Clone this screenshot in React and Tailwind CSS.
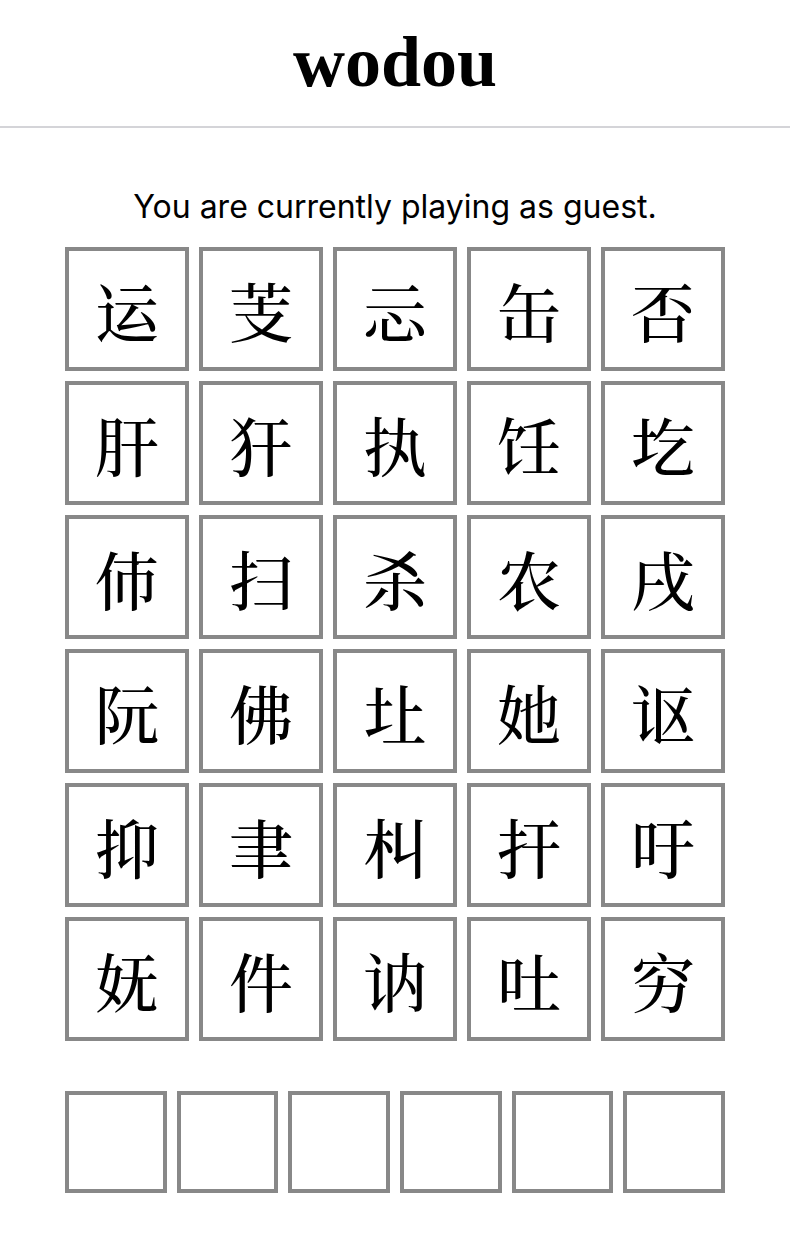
import React from 'react';

const rows = [
  ['运', '芰', '忈', '缶', '否'],
  ['肝', '犴', '执', '饪', '圪'],
  ['伂', '扫', '杀', '农', '戌'],
  ['阮', '佛', '圵', '她', '讴'],
  ['抑', '聿', '朻', '扞', '吁'],
  ['妩', '件', '讷', '吐', '穷'],
];

export default function App() {
  return (
    <div className="min-h-screen bg-white text-black">
      {/* header */}
      <header className="border-b-2 border-[#d4d4d8] pt-[26px] pb-[28px] text-center">
        <h1 className="text-[72px] font-bold leading-none" style={{ fontFamily: '"Liberation Serif", serif' }}>
          wodou
        </h1>
      </header>

      <main className="flex flex-col items-center pt-[59px]">
        <p className="text-[32px] leading-[40px]" style={{ fontFamily: 'Inter, sans-serif' }}>
          You are currently playing as guest.
        </p>

        {/* board */}
        <div className="mt-[20px] grid w-[660px] grid-cols-5 gap-[10px]">
          {rows.flat().map((ch, i) => (
            <div
              key={i}
              className="flex aspect-square items-center justify-center border-4 border-[#888888] text-[64px] font-medium leading-none"
              style={{ fontFamily: '"Noto Serif CJK SC", "Noto Sans CJK SC", serif' }}
            >
              {ch}
            </div>
          ))}
        </div>

        {/* answer slots */}
        <div className="mt-[50px] flex w-[660px] gap-[10px]">
          {[0, 1, 2, 3, 4, 5].map((i) => (
            <div key={i} className="aspect-square flex-1 border-4 border-[#888888]" />
          ))}
        </div>
      </main>
    </div>
  );
}
